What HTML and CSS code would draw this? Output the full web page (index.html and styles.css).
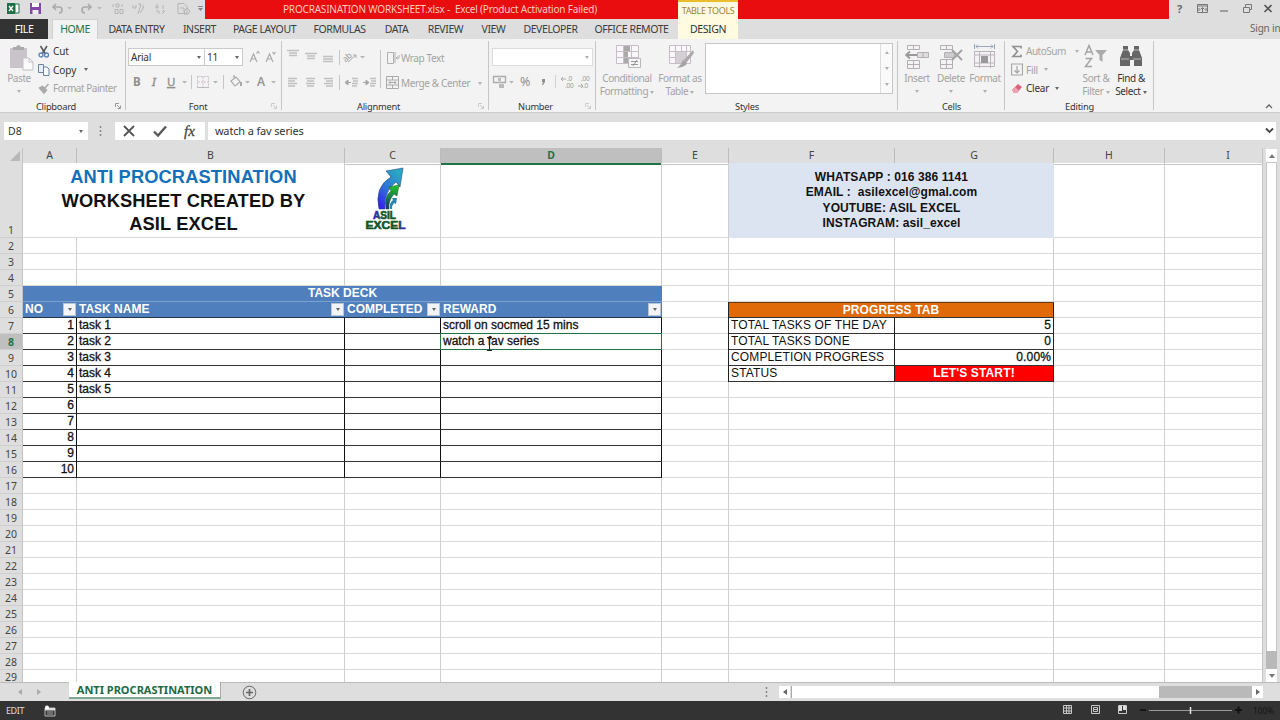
FILE: index.html
```html
<!DOCTYPE html>
<html lang="en">
<head>
<meta charset="utf-8">
<title>PROCRASINATION WORKSHEET.xlsx - Excel</title>
<link rel="stylesheet" href="styles.css">
</head>
<body>
<div class="app">
  <header class="top">
    <div class="top-left">
      <svg class="quick" width="205" height="19" viewBox="0 0 205 19">
        <rect x="7" y="3" width="8" height="11" fill="#1d7044"/><path d="M15 4h4v9h-4z" fill="#fff" stroke="#1d7044"/><path d="M9 6l4 5M13 6l-4 5" stroke="#fff" stroke-width="1.4"/>
        <path d="M30 3h11v11H30z" fill="#8347a8"/><path d="M32 3h7v4h-7z" fill="#fff"/><path d="M32.500 10h6v4h-6z" fill="#eee"/>
        <g fill="none" stroke="#a9a9ae" stroke-width="1.600"><path d="M56 4l-3 3 3 3M53 7h6q3 0 3 3t-3 3"/><path d="M88 4l3 3-3 3M91 7h-6q-3 0-3 3t3 3"/></g>
        <path d="M67 7h5l-2.500 2.500zM97 7h5l-2.500 2.500z" fill="#bbb"/>
        <g fill="none" stroke="#b5b5b5"><path d="M113 4v3M116 4h3v3h-3zM122 4v3M115 9.500h3v4h-3zM120 9.500h3v4h-3z"/><path d="M133 5v3h3v-3M138 4h3l-3 10M143 5v3M144 7l-4 6M157 4v5M155 7h4M163 5v4M156 11h3v3M162 11h3l-3 3"/><path d="M178 3.500h6l3 3v7h-9zM180 8h4v4M185 10l2-2 3 3-2 3h-4z"/></g>
        <path d="M198 8h5l-2.500 3zM198 6h5v1h-5z" fill="#888"/>
      </svg>
      <nav class="tabs-a">
        <span class="file">FILE</span><span class="home">HOME</span>
        <span class="tab w57">DATA ENTRY</span><span class="tab w31">INSERT</span>
      </nav>
    </div>
    <div class="top-mid">
      <div class="titlebar"><span>PROCRASINATION WORKSHEET.xlsx -&nbsp; Excel (Product Activation Failed)</span></div>
      <nav class="tabs-b">
        <span class="tab w61">PAGE LAYOUT</span><span class="tab w50">FORMULAS</span><span class="tab w24">DATA</span><span class="tab w35">REVIEW</span><span class="tab w23">VIEW</span><span class="tab w53">DEVELOPER</span><span class="tab w70">OFFICE REMOTE</span>
      </nav>
    </div>
    <div class="context"><span class="tools">TABLE TOOLS</span><span class="design">DESIGN</span></div>
    <div class="red-rest"></div>
    <div class="top-right">
      <svg width="111" height="19" viewBox="0 0 111 19">
        <text x="8" y="12.500" font-size="11" font-weight="700" fill="#6a6a6a">?</text>
        <path d="M28.500 4.500h10v8h-10zM28.500 6h10M33.500 12V7.500M31.500 9.500l2-2 2 2M30 8v3M37 8v3" fill="none" stroke="#777"/>
        <path d="M51 11h8" stroke="#777" stroke-width="1.300"/>
        <path d="M74.500 7.500h6v5h-6zM76.500 7V4.500h6v5H81" fill="none" stroke="#777"/>
        <path d="M95.500 5l7 7M102.500 5l-7 7" stroke="#555" stroke-width="1.700"/>
      </svg>
      <span class="signin">Sign in</span>
    </div>
  </header>

  <section class="ribbon">
    <div class="group g-clip">
      <div class="body">
        <div class="big paste">
          <svg width="26" height="27" viewBox="0 0 26 27"><path d="M2 4h17v20H2z" fill="#c9c4c9"/><path d="M5 6V3h3q2.500-4 5 0h3v3z" fill="#aaa"/><path d="M15 14h6l4 4v8H15z" fill="#fafafa" stroke="#c3c0c6"/><path d="M21 14v4h4" fill="none" stroke="#c3c0c6"/></svg>
          <span class="off">Paste</span><i class="arr"></i>
        </div>
        <div class="stack">
          <div><svg width="12" height="13" viewBox="0 0 12 13"><path d="M2.500 1l5 8M9 1L4 9" stroke="#555" stroke-width="1.500"/><circle cx="3" cy="10" r="2" fill="none" stroke="#5b84b8" stroke-width="1.300"/><circle cx="8.500" cy="10" r="2" fill="none" stroke="#5b84b8" stroke-width="1.300"/></svg><span class="cut">Cut</span></div>
          <div><svg width="12" height="13" viewBox="0 0 12 13"><path d="M.5 1.500h5v8h-5z" fill="#e8eef6" stroke="#68829f"/><path d="M5.500 4h3.500l2 2v6.500H5.500z" fill="#f8fbff" stroke="#68829f"/></svg><span class="copy">Copy</span><i class="arr dk"></i></div>
          <div><svg width="12" height="13" viewBox="0 0 12 13"><path d="M10.500 2L7 6M4 4l5 4.500M1.500 6l4.500 5 2.500-3L4.500 4.500z" fill="#aaa" stroke="#aaa" stroke-width="1.500"/></svg><span class="off painter">Format Painter</span></div>
        </div>
      </div>
      <div class="label launchable">Clipboard<svg class="launch" width="6" height="6"><path d="M.5 4V.5H4M2 2l3 3M5.500 2.500v3h-3" fill="none" stroke="#999"/></svg></div>
    </div>

    <div class="group g-font">
      <div class="combo-row"><span class="combo fam">Arial<i class="arr dk"></i></span><span class="combo size">11<i class="arr dk"></i></span>
        <svg width="32" height="18" viewBox="0 0 32 18" fill="none" stroke="#aaa" stroke-width="1.200"><path d="M4 14L7.500 6 11 14M5 11h5M10.500 5.500L12 3.500l1.500 2"/><path d="M20 14l3.500-8L27 14M21 11h5M26.500 4L28 6l1.500-2"/></svg>
      </div>
      <svg class="tools-row" width="155" height="18" viewBox="0 0 155 18">
        <g fill="#8f8f8f" font-size="11.500" font-weight="700"><text x="5" y="13">B</text><text x="24" y="13" font-style="italic" font-weight="400" stroke="#8f8f8f" stroke-width=".4">I</text><text x="39" y="13" font-weight="400" text-decoration="underline" stroke="#8f8f8f" stroke-width=".3">U</text></g>
        <path d="M54 8h5l-2.500 2.500zM85 8h5l-2.500 2.500zM117 8h5l-2.500 2.500zM143 8h5l-2.500 2.500z" fill="#b5b5b5"/>
        <path d="M63.500 2v14M95.500 2v14" stroke="#c6c6c6"/>
        <path d="M69.500 3.500h11v11h-11zM75 4v10M70 9h10" fill="none" stroke="#cdbecb" stroke-dasharray="2 1"/><path d="M69 14.500h12" stroke="#bbb"/>
        <path d="M103 8l5-4 4 5-5 4zM106 5V2" fill="none" stroke="#a8a8a8" stroke-width="1.200"/><path d="M113 9v4" stroke="#a8a8a8" stroke-width="2"/>
        <text x="129" y="13" font-size="12" font-weight="600" fill="#989898">A</text>
      </svg>
      <div class="label launchable">Font<svg class="launch" width="6" height="6"><path d="M.5 4V.5H4M2 2l3 3M5.500 2.500v3h-3" fill="none" stroke="#ccc"/></svg></div>
    </div>

    <div class="group g-align">
      <div class="body">
        <svg width="100" height="52" viewBox="0 0 100 52">
          <g stroke="#c0c0c0" stroke-width="1.300">
            <path d="M5 8.500h12M7 11h8M7 13.500h8M23 11.500h12M25 14h8M25 16.500h8M41 14.500h10M41 17h10M41 19.500h10" />
            <path d="M6 36.500h9M6 39h7M6 41.500h9M6 44h7M24 36.500h9M25 39h7M24 41.500h9M25 44h7M42 36.500h9M44 39h7M42 41.500h9M44 44h7"/>
            <path d="M70 36.500h6M71 39h5M70 41.500h6M70 44h5M88 36.500h6M89 39h5M88 41.500h6M88 44h5"/>
          </g>
          <path d="M57.500 8v15M57.500 33v15M98.500 8v38" stroke="#c6c6c6"/>
          <g transform="rotate(-42 68 15)"><text x="61" y="16" font-size="8.500" fill="#999">ab</text></g><path d="M66 20l8-7M74 13h-3M74 13v3" stroke="#aaa" fill="none"/>
          <path d="M78 14h5l-2.500 2.500z" fill="#b5b5b5"/>
          <path d="M63 40.500h6M66 38l-3 2.500 3 2.500zM81 40.500h6M84 38l3 2.500-3 2.500z" fill="#a5a5a5" stroke="#a5a5a5"/>
        </svg>
        <div class="wraps">
          <div><svg width="14" height="14" viewBox="0 0 14 14" fill="none" stroke="#b0b0b0"><path d="M1.500 1.500h6v11h-6zM9 1v11"/><path d="M13 4v3h-3M11.500 5.500L10 7l1.500 1.500"/></svg><span class="off wrap">Wrap Text</span></div>
          <div><svg width="14" height="14" viewBox="0 0 14 14" fill="none" stroke="#aaa"><path d="M.5.500h12v12H.5zM.5 4h12M.5 9h12M6.500 1v3M6.500 9v3M3 6.500h7M4.500 5L3 6.500 4.500 8M8.500 5L10 6.500 8.500 8"/></svg><span class="off merge">Merge &amp; Center</span><i class="arr"></i></div>
        </div>
      </div>
      <div class="label launchable">Alignment<svg class="launch" width="6" height="6"><path d="M.5 4V.5H4M2 2l3 3M5.500 2.500v3h-3" fill="none" stroke="#ccc"/></svg></div>
    </div>

    <div class="group g-num">
      <span class="combo num"><i class="arr"></i></span>
      <svg class="tools-row" width="106" height="18" viewBox="0 0 106 18">
        <path d="M4.500 3.500h12v6h-12z" fill="none" stroke="#aaa" stroke-width="1.300"/><path d="M9 5h3v3H9zM10 11h5v4h-5z" fill="#bbb"/>
        <path d="M20 8h5l-2.500 2.500z" fill="#b5b5b5"/>
        <text x="31" y="13" font-size="12.500" fill="#909090">%</text><path d="M53 6h3v3l-2 3h-1l1-3h-1z" fill="#909090"/>
        <path d="M66.500 2v13" stroke="#d0d0d0"/>
        <g fill="#9c9c9c" font-size="6.500"><text x="78" y="8">.0</text><text x="76" y="15">.00</text><text x="92" y="8">.00</text><text x="94" y="15">.0</text></g>
        <path d="M72 6h5M74 4l-2 2 2 2M89 13h5M92 11l2 2-2 2" stroke="#aaa" fill="none"/>
      </svg>
      <div class="label launchable">Number<svg class="launch" width="6" height="6"><path d="M.5 4V.5H4M2 2l3 3M5.500 2.500v3h-3" fill="none" stroke="#ccc"/></svg></div>
    </div>

    <div class="group g-styles">
      <div class="body">
        <div class="big cond"><svg width="26" height="25" viewBox="0 0 26 25"><path d="M.5 1.500h22v18H.5zM.5 7.500h22M.5 13.500h22M7.500 2v17M15.500 2v17" fill="#f8f8f8" stroke="#c8bcc8"/><path d="M8 2h6v5H8zM8 8h4v5H8zM8 14h6v5H8z" fill="#a9a9a9"/><path d="M12.500 14.500h12v9h-12z" fill="#f6f6f6" stroke="#b9b9b9"/><path d="M15 17.500h7M15 20.500h7M21 16l-4 6" stroke="#999"/></svg><span class="off">Conditional</span><span class="off">Formatting <i class="arr"></i></span></div>
        <div class="big fmt"><svg width="26" height="25" viewBox="0 0 26 25"><path d="M.5 1.500h21v18H.5zM.5 7.500h21M.5 13.500h21M6.500 2v17M12.500 2v17M17.500 2v17" fill="#f8f8f8" stroke="#c8bcc8"/><path d="M7 8h10v11H7z" fill="#d3cfd3"/><path d="M24 6l1 3-7 9-3-2z" fill="#aaa"/><path d="M14 16q5 1 3 5-4 3-9 3 4-3 6-8z" fill="#a5a5a5"/></svg><span class="off">Format as</span><span class="off">Table <i class="arr"></i></span></div>
        <div class="gallery"><div class="gal-btns"><i class="arr up"></i><i class="arr"></i><i class="arr"></i></div></div>
      </div>
      <div class="label">Styles</div>
    </div>

    <div class="group g-cells">
      <div class="body">
        <div class="big"><svg width="24" height="26" viewBox="0 0 24 26" fill="none" stroke="#b5aeb5"><path d="M2.500 1.500h12v4h-12zM8.500 1v5M2.500 16.500h12v8h-12zM2.500 20.500h12M8.500 16v8"/><path d="M12.500 8.500h11v5h-11zM18 9v4" fill="#ddd"/><path d="M1 11h11M5 7.500L1 11l4 3.500" stroke="#999" stroke-width="1.800"/></svg><span class="off">Insert</span><i class="arr"></i></div>
        <div class="big"><svg width="24" height="26" viewBox="0 0 24 26" fill="none" stroke="#b5aeb5"><path d="M1.500 1.500h12v4h-12zM7.500 1v5M1.500 15.500h12v9h-12zM1.500 20.500h12M7.500 16v8"/><path d="M5.500 8.500h10v5h-10z" fill="#ccc"/><path d="M13 6l10 10M23 6L13 16" stroke="#a3a3a3" stroke-width="2"/></svg><span class="off">Delete</span><i class="arr"></i></div>
        <div class="big"><svg width="24" height="26" viewBox="0 0 24 26" fill="none" stroke="#bdb3bd"><path d="M1.500 7.500h20v15h-20zM1.500 11h20M1.500 19h20M6.500 7v17M17.500 7v17"/><path d="M8 12h7v7H8z" fill="#999" stroke="none"/><path d="M3 2.500h17M5 .5l-2 2 2 2M18 .5l2 2-2 2M1.500 0v5M21.500 0v5" stroke="#99a5b8"/></svg><span class="off">Format</span><i class="arr"></i></div>
      </div>
      <div class="label">Cells</div>
    </div>

    <div class="group g-edit">
      <div class="body">
        <div class="stack">
          <div><svg width="12" height="13" viewBox="0 0 12 13"><path d="M10 3.500V1.500H2l4.500 5L2 11.500h8V9.500" fill="none" stroke="#8f8f8f" stroke-width="1.600"/></svg><span class="off autosum">AutoSum</span><i class="arr"></i></div>
          <div><svg width="12" height="13" viewBox="0 0 12 13"><path d="M.5 1h11v11H.5zM6 3v7M3.500 7.500L6 10l2.500-2.500" fill="none" stroke="#a5a5a5" stroke-width="1.200"/></svg><span class="off fill">Fill</span><i class="arr"></i></div>
          <div><svg width="12" height="13" viewBox="0 0 12 13"><path d="M1 8l6-6 4 3-5 6H3z" fill="#d9667e"/><path d="M1 8l3-3 4 3.500L6 11H3z" fill="#eda2b1"/></svg><span class="clear">Clear</span><i class="arr dk"></i></div>
        </div>
        <div class="big sort"><svg width="26" height="25" viewBox="0 0 26 25"><g fill="none" stroke="#a5a5a5" stroke-width="1.500"><path d="M2 11L6 1.500 10 11M3.500 8h5M2.500 14.500h6l-6 8h6.500"/></g><path d="M12 6h12l-4.500 5v7l-3-2v-5z" fill="#aaa"/></svg><span class="off">Sort &amp;</span><span class="off">Filter <i class="arr"></i></span></div>
        <div class="big find"><svg width="26" height="25" viewBox="0 0 26 25"><path d="M5 2h5v4l2 3v3h2V9l2-3V2h5v4l3 8v8h-8v-6h-2v0h-2v6H2v-8l3-8z" fill="#666"/><path d="M5 6h5M16 6h5M3 15h8M15 15h8" stroke="#bbb"/></svg><span>Find &amp;</span><span>Select <i class="arr dk"></i></span></div>
      </div>
      <div class="label">Editing</div>
    </div>
    <div class="ribbon-end"><svg width="8" height="6"><path d="M1 5l3-3 3 3" fill="none" stroke="#666" stroke-width="1.300"/></svg></div>
  </section>

  <section class="formula">
    <div class="namebox">D8<i class="arr dk"></i></div>
    <svg width="3" height="10" class="grip"><path d="M1.500 0v10" stroke="#888" stroke-width="1.500" stroke-dasharray="2 2"/></svg>
    <div class="fx"><svg width="90" height="18" viewBox="0 0 90 18"><path d="M9 4l10 10M19 4L9 14" stroke="#555" stroke-width="1.800"/><path d="M39 9.500l4 4L51 4.500" fill="none" stroke="#555" stroke-width="2.300"/><text x="69" y="13.500" class="fxt">fx</text></svg></div>
    <div class="input"><span>watch a fav series</span><svg width="9" height="7"><path d="M1 1.500l3.500 3.500L8 1.500" fill="none" stroke="#444" stroke-width="1.800"/></svg></div>
  </section>

  <section class="sheet">
    <div class="rowheads">
      <div class="corner"><svg width="10" height="10"><path d="M10 0v10H0z" fill="#b8b8b8"/></svg></div>
      <div class="tall">1</div><div>2</div><div>3</div><div>4</div><div>5</div><div>6</div><div>7</div><div class="sel">8</div><div>9</div><div>10</div><div>11</div><div>12</div><div>13</div><div>14</div><div>15</div><div>16</div><div>17</div><div>18</div><div>19</div><div>20</div><div>21</div><div>22</div><div>23</div><div>24</div><div>25</div><div>26</div><div>27</div><div>28</div><div class="last">29</div>
    </div>
    <div class="main">
      <div class="cols heads"><div>A</div><div>B</div><div>C</div><div class="sel">D</div><div>E</div><div>F</div><div>G</div><div>H</div><div>I</div></div>
      <div class="cols grid">
        <div class="line a"></div><div class="line b"></div><div class="line c"></div><div class="line d"></div><div class="line e"></div><div class="line f"></div><div class="line g"></div><div class="line h"></div>
        <div class="title r1"><span class="blue">ANTI PROCRASTINATION</span><span>WORKSHEET CREATED BY</span><span>ASIL EXCEL</span></div>
        <div class="logo r1 c">
          <svg width="44" height="68" viewBox="0 0 44 68">
            <defs><linearGradient id="up" x1="0" y1="1" x2="0.600" y2="0"><stop offset="0" stop-color="#3511f0"/><stop offset=".5" stop-color="#2f70d8"/><stop offset="1" stop-color="#2aa6c2"/></linearGradient><linearGradient id="gr" x1="0" y1="1" x2="0" y2="0"><stop offset="0" stop-color="#17307a"/><stop offset="1" stop-color="#20c820"/></linearGradient>
            <linearGradient id="asil"><stop offset="0" stop-color="#3a12e0"/><stop offset=".35" stop-color="#14532a"/><stop offset="1" stop-color="#14532a"/></linearGradient>
            <linearGradient id="excel"><stop offset="0" stop-color="#14532a"/><stop offset=".78" stop-color="#14532a"/><stop offset="1" stop-color="#4a22dd"/></linearGradient></defs>
            <path d="M15 44Q10 22 27 12l-5-6 17-3-3 19-4-5Q20 26 21 44z" fill="url(#up)" stroke="#264c80" stroke-width=".6"/>
            <path d="M22 44Q20 31 27 26l-2-4 10-2-2 11-3-2Q24 36 25 44z" fill="url(#gr)" stroke="#155a25" stroke-width=".5"/>
            <path d="M26 44q-1-6 3-9l-1-2 5 0-1 6-2-1q-2 2-2 6z" fill="#2a83b0"/>
            <g class="logotext"><text x="9" y="54" textLength="23" lengthAdjust="spacingAndGlyphs" fill="url(#asil)" stroke="url(#asil)">ASIL</text><text x="1.500" y="63.500" textLength="40" lengthAdjust="spacingAndGlyphs" fill="url(#excel)" stroke="url(#excel)">EXCEL</text></g>
          </svg>
        </div>
        <div class="contact r1"><span>WHATSAPP : 016 386 1141</span><span>EMAIL :&nbsp; asilexcel@gmal.com</span><span>YOUTUBE: ASIL EXCEL</span><span>INSTAGRAM: asil_excel</span></div>

        <div class="deck">TASK DECK</div>
        <div class="th a"><span>NO</span><b class="filter"></b></div><div class="th b"><span>TASK NAME</span><b class="filter"></b></div><div class="th c"><span class="comp">COMPLETED</span><b class="filter"></b></div><div class="th d"><span>REWARD</span><b class="filter"></b></div>
        <div class="tasks">
          <span>1</span><span>task 1</span><span></span><span>scroll on socmed 15 mins</span>
          <span>2</span><span>task 2</span><span></span><span>watch a fav series</span>
          <span>3</span><span>task 3</span><span></span><span></span>
          <span>4</span><span>task 4</span><span></span><span></span>
          <span>5</span><span>task 5</span><span></span><span></span>
          <span>6</span><span></span><span></span><span></span>
          <span>7</span><span></span><span></span><span></span>
          <span>8</span><span></span><span></span><span></span>
          <span>9</span><span></span><span></span><span></span>
          <span>10</span><span></span><span></span><span></span>
        </div>
        <div class="selection"><svg class="ibeam" width="7" height="14"><path d="M1 .5h5M3.500 1v12M1 13.500h5" stroke="#222" fill="none"/></svg></div>
        <div class="progress">
          <span class="phead">PROGRESS TAB</span>
          <span>TOTAL TASKS OF THE DAY</span><span class="val">5</span>
          <span>TOTAL TASKS DONE</span><span class="val">0</span>
          <span>COMPLETION PROGRESS</span><span class="val">0.00%</span>
          <span>STATUS</span><span class="start">LET'S START!</span>
        </div>
      </div>
    </div>
    <div class="vscroll"><div class="btn"><i class="tri up"></i></div><div class="track"></div><div class="thumb"></div><div class="btn"><i class="tri down"></i></div></div>
  </section>

  <footer class="sheetbar">
    <div class="nav"><i class="tri left"></i><i class="tri right"></i></div>
    <div class="sheet-tab">ANTI PROCRASTINATION</div>
    <svg class="plus" width="15" height="15" viewBox="0 0 15 15" fill="none" stroke="#666"><circle cx="7.500" cy="7.500" r="6.300"/><path d="M4 7.500h7M7.500 4v7" stroke-width="1.700"/></svg>
    <svg class="dots" width="3" height="10"><path d="M1.500 0v10" stroke="#888" stroke-width="1.500" stroke-dasharray="2 2"/></svg>
    <div class="hscroll"><div class="hb"><i class="tri left dk"></i></div><div class="htrack"></div><div class="hthumb"></div><div class="hb"><i class="tri right dk"></i></div></div>
  </footer>
  <div class="status">
    <span class="edit">EDIT</span>
    <svg width="12" height="12" viewBox="0 0 12 12"><path d="M1 3h10v8H1z" fill="none" stroke="#bbb"/><path d="M1 3h10v2.500H1z" fill="#ddd"/><circle cx="3" cy="2.500" r="2" fill="#fff"/><path d="M3 7h6M3 9h6" stroke="#aaa"/></svg>
    <svg class="views" width="222" height="19" viewBox="0 0 222 19">
      <g fill="none" stroke="#c8c8c8"><path d="M7.500 4.500h8v8h-8zM10.500 4v9M13 4v9M7 7h9M7 10h9"/><path d="M35.500 4.500h8v8h-8zM37.500 6.500h4v4h-4zM38 8.500h3"/><path d="M62.500 4.500h8v8h-8z"/></g><path d="M63 5h3v5h-3zM67 5h3v4h-3z" fill="#ddd"/>
      <path d="M84 9h6" stroke="#151515" stroke-width="2"/><path d="M93 9.500h83" stroke="#999"/><path d="M134.500 6v7" stroke="#e5e5e5" stroke-width="1.500"/><path d="M179 9h7M182.500 5.500v7" stroke="#111" stroke-width="2"/>
      <text x="197" y="13" textLength="21" lengthAdjust="spacingAndGlyphs" font-size="9" fill="#151515">100%</text>
    </svg>
  </div>
</div>
</body>
</html>
```
FILE: styles.css
```css
* { box-sizing: border-box; }
body { margin: 0; font-family: "Noto Sans", "Open Sans", sans-serif; font-size: 10px; color: #333; overflow: hidden; }
svg { display: block; flex: none; }
.app { width: 1280px; height: 720px; display: flex; flex-direction: column; background: #dedede; overflow: hidden; white-space: nowrap; }
.arr { display: inline-block; flex: none; border: 2.500px solid transparent; border-top: 3px solid #b0b0b0; border-bottom: 0; }
.arr.dk { border-top-color: #666; }
.arr.up { border-top: 0; border-bottom: 3px solid #b0b0b0; }
.off { color: #a3a3a3; }

/* Title bar and ribbon tabs */
.top { height: 39px; flex: none; display: flex; background: #dedede; }
.top-left nav, .top-mid nav { height: 20px; display: flex; line-height: 20px; font-size: 10.500px; letter-spacing: -.4px; color: #3c3c3c; }
.top-left { width: 205px; flex: none; }
.file { width: 48px; flex: none; background: #333; color: #fff; text-align: center; }
.home { width: 46px; flex: none; margin-left: 4px; background: #f3f3f3; color: #217346; text-align: center; border: 1px solid #d0d0d0; border-bottom: 0; line-height: 18px; }
.tab { display: flex; justify-content: center; flex: none; }
.tabs-a .w57 { margin-left: 10px; }
.tabs-a .w31 { margin-left: 19px; }
.tabs-b { gap: 19px; padding-left: 29px; }
.w57 { width: 57px; } .w31 { width: 31px; } .w61 { width: 61px; } .w50 { width: 51px; } .w24 { width: 25px; } .w35 { width: 35px; } .w23 { width: 23px; } .w53 { width: 53px; } .w70 { width: 71px; }
.top-mid { width: 473px; flex: none; }
.titlebar { height: 19px; background: #e90d0f; color: #ffc9c0; font-size: 10px; line-height: 19px; padding-left: 78px; letter-spacing: -.19px; }
.context { width: 60px; background: #fffbe0; border-top: 2px solid #ebbd2c; display: flex; flex-direction: column; align-items: center; }
.tools { font-size: 9px; line-height: 17px; letter-spacing: -.35px; color: #a08431; }
.design { font-size: 10.500px; line-height: 20px; letter-spacing: -.4px; }
.red-rest { width: 431px; height: 19px; background: #e90d0f; }
.top-right { width: 111px; overflow: hidden; }
.signin { display: block; padding-left: 81px; line-height: 18px; color: #666; letter-spacing: -.2px; }

/* Ribbon */
.ribbon { height: 74px; flex: none; display: flex; background: #f3f3f3; border-bottom: 1px solid #cbcbcb; letter-spacing: -.25px; }
.group { display: flex; flex-direction: column; padding-top: 3px; flex: none; background: linear-gradient(#c6c6c6, #c6c6c6) right 0 top 2px / 1px 69px no-repeat; }
.body { display: flex; height: 59px; }
.label { margin-top: auto; height: 11px; line-height: 11px; font-size: 9.300px; text-align: center; color: #333; }
.label.launchable { display: grid; grid-template-columns: 1fr 14px; }
.label svg { margin: 2px 0 0 3px; }
.big { display: flex; flex-direction: column; align-items: center; line-height: 13px; letter-spacing: -.4px; }
.big svg { margin: 2px 0 3px; }
.big > .arr { margin-top: 5px; }
.big .arr { vertical-align: 1px; }
.stack { display: flex; flex-direction: column; }
.stack > div { display: flex; align-items: center; height: 18.500px; gap: 3px; }
.stack .arr { margin-left: 3px; }
.g-clip { width: 126px; }
.paste { width: 30px; margin-left: 4px; }
.paste svg { margin: 2px 0 1px 4px; }
.paste .arr { margin-top: 5px; }
.g-clip .stack { margin-left: 4px; }
.copy { margin-right: 2px; letter-spacing: 0; }
.cut { letter-spacing: -.1px; }
.painter { letter-spacing: -.48px; }
.g-font { width: 156px; padding-left: 2px; }
.combo-row { display: flex; margin-top: 6px; }
.combo { height: 18px; background: #fff; border: 1px solid #cacaca; display: flex; align-items: center; justify-content: space-between; padding: 0 3px 0 2px; }
.fam { width: 77px; } .size { width: 38px; border-left: 0; }
.combo-row svg { margin-left: 3px; }
.tools-row { margin-top: 7px; }
.g-align { width: 207px; }
.wraps { padding: 9px 0 0 4px; }
.wraps > div { display: flex; height: 25px; align-items: flex-start; gap: 1px; line-height: 14px; }
.wrap { letter-spacing: -.4px; }
.merge { letter-spacing: -.38px; }
.wraps .arr { margin: 6px 0 0 7px; }
.g-num { width: 107px; }
.num { width: 101px; margin: 6px 0 0 3px; justify-content: flex-end; border-color: #ddd; }
.g-styles { width: 302px; }
.cond { width: 54px; margin-left: 4px; }
.fmt { width: 52px; }
.cond svg { margin-left: 3px; }
.fmt svg { margin-left: 3px; }
.gallery { width: 188px; height: 51px; margin: 1px 0 0 -1px; background: #fff; border: 1px solid #c6c6c6; display: flex; justify-content: flex-end; }
.gal-btns { width: 12px; border-left: 1px solid #ddd; display: flex; flex-direction: column; justify-content: space-around; align-items: center; background: #fafafa; }
.g-cells { width: 107px; }
.g-cells .big { width: 34px; }
.g-cells .big:first-child { margin-left: 2px; }
.g-cells svg { margin-bottom: 2px; }
.g-edit { width: 149px; }
.g-edit .stack { width: 68px; margin-left: 6px; }
.autosum { letter-spacing: -.5px; margin-right: 3px; }
.sort { width: 34px; }
.find { width: 36px; }
.ribbon-end { flex: 1; display: flex; align-items: flex-end; justify-content: flex-end; padding: 0 7px 3px 0; }

/* Formula bar */
.formula { height: 35px; flex: none; display: flex; padding: 9px 4px 0; align-items: flex-start; background: #dedede; }
.formula > div { height: 18px; background: #fff; }
.namebox { width: 84px; display: flex; align-items: center; justify-content: space-between; padding: 0 5px 0 4px; font-size: 10.500px; }
.grip { margin: 4px 13px 0 11px; }
.fx { width: 90px; }
.fxt { font: italic 15px "Liberation Serif", serif; fill: #444; stroke: #444; stroke-width: .3px; }
.formula .input { width: 1070px; margin-left: 3px; display: flex; align-items: center; justify-content: space-between; padding: 0 2px 2px 7px; font-size: 11px; letter-spacing: -.15px; }

/* Worksheet */
.sheet { height: 534px; flex: none; display: flex; overflow: hidden; }
.rowheads { width: 23px; flex: none; text-align: center; font-size: 10.500px; color: #444; border-right: 1px solid #c4c4c4; }
.rowheads > div { height: 16px; line-height: 16px; border-bottom: 1px solid #cfcfcf; }
.rowheads .corner { height: 15px; padding: 3px 0 0 10px; border-bottom: 0; }
.rowheads .tall { height: 75px; padding-top: 59px; }
.rowheads .sel { background: #bfbfbf; color: #217346; font-weight: 700; }
.rowheads .last { height: 15px; line-height: 15px; border-bottom: 0; }
.main { width: 1240px; flex: none; background: #fff; border-right: 1px solid #c4c4c4; overflow: hidden; }
.cols { display: grid; grid-template-columns: 54px 268px 96px 221px 67px 166px 159px 111px 127px; width: 1269px; }
.heads { height: 15px; background: #dedede; font-size: 10.500px; line-height: 15px; text-align: center; color: #444; }
.heads > div { border-right: 1px solid #bcbcbc; border-bottom: 1px solid #c8c8c8; }
.heads .sel { background: #bfbfbf; color: #217346; font-weight: 700; border-bottom: 2px solid #217346; }
.grid { grid-template-rows: 75px repeat(28, 16px); font: 12px/15px "Liberation Sans", Arial, sans-serif; color: #111; background: repeating-linear-gradient(#fff 0, #fff 15px, #dadada 15px, #dadada 16px) 0 75px no-repeat, linear-gradient(#dadada, #dadada) 0 74px / 100% 1px no-repeat; }
.line { grid-row: 1 / 30; border-right: 1px solid #cfcfcf; }
.a { grid-column: 1; } .b { grid-column: 2; } .c { grid-column: 3; } .d { grid-column: 4; } .e { grid-column: 5; } .f { grid-column: 6; } .g { grid-column: 7; } .h { grid-column: 8; }
.r1 { grid-row: 1; }
.title { grid-column: 1 / 3; background: #fff; display: flex; flex-direction: column; align-items: center; font-weight: 700; font-size: 18.300px; line-height: 23.500px; letter-spacing: .12px; padding-top: 2px; border-right: 1px solid #cfcfcf; border-bottom: 1px solid #dadada; }
.blue { color: #1470b8; }
.logo { padding: 2px 0 0 19px; }
.logotext { font: 700 11px "Liberation Sans", sans-serif; stroke-width: .6px; }
.contact { grid-column: 6 / 8; background: #dce4f1; display: flex; flex-direction: column; align-items: center; font-weight: 700; line-height: 15.400px; letter-spacing: .1px; padding-top: 7px; }
.deck { grid-row: 5; grid-column: 1 / 5; background: #4f7fbd; color: #fff; font-weight: 700; text-align: center; border-bottom: 1px solid #7ba0d2; }
.th { grid-row: 6; background: #4f7fbd; color: #fff; font-weight: 700; display: flex; justify-content: space-between; padding-left: 2px; border-bottom: 1px solid #26344a; }
.filter { width: 13px; height: 13px; margin: 1px 1px 0 0; background: #f2f4f8; border: 1px solid #b9c4d4; display: flex; align-items: center; justify-content: center; }
.filter::after { content: ""; border: 2.500px solid transparent; border-top: 3px solid #666; border-bottom: 0; }
.tasks { grid-row: 7 / 17; grid-column: 1 / 5; display: grid; grid-template-columns: 54px 268px 96px 221px; -webkit-text-stroke: .3px #111; }
.tasks span { height: 16px; padding-left: 2px; border-right: 1px solid #111; border-bottom: 1px solid #333; }
.tasks span:nth-child(4n + 1) { text-align: right; padding-right: 2px; }
.selection { grid-row: 8; grid-column: 4; border: 1px solid #217346; margin: -1px 0 0 -1px; position: relative; }
.ibeam { position: absolute; left: 45px; top: 3px; }
.progress { grid-row: 6 / 11; grid-column: 6 / 8; display: grid; grid-template-columns: 166px 159px; background: #fff; margin: 0 0 0 -1px; border-left: 1px solid #222; }
.progress span { height: 16px; border-right: 1px solid #222; border-bottom: 1px solid #333; padding: 0 2px; letter-spacing: .13px; }
.progress .phead { grid-column: 1 / 3; background: #e06a0a; color: #fff; font-weight: 700; text-align: center; border-top: 1px solid #6b3a10; line-height: 14px; }
.progress .val { text-align: right; -webkit-text-stroke: .3px #111; }
.progress .start { background: #f00; color: #fff; font-weight: 700; text-align: center; }

/* Scroll bars */
.vscroll { width: 11px; margin: 1px 0 0 3px; display: flex; flex-direction: column; }
.btn { height: 13px; background: #fff; display: flex; align-items: center; justify-content: center; flex: none; }
.track { flex: 1; background: #fff; border: 1px solid #c6c6c6; border-bottom: 0; }
.thumb { height: 18px; background: #b9b9b9; }
.tri { display: block; border: 3px solid transparent; }
.tri.up { border-top: 0; border-bottom: 4px solid #777; }
.tri.down { border-bottom: 0; border-top: 4px solid #777; }
.tri.left { border-left: 0; border-right: 4px solid #aaa; }
.tri.right { border-right: 0; border-left: 4px solid #aaa; }
.tri.left.dk { border-right-color: #666; }
.tri.right.dk { border-left-color: #666; }

/* Sheet tabs and status bar */
.sheetbar { height: 19px; flex: none; display: flex; border-top: 1px solid #bbb; background: #dedede; }
.nav { width: 69px; display: flex; align-items: flex-start; gap: 15px; padding: 6px 0 0 18px; }
.sheet-tab { width: 152px; height: 17px; margin-top: -1px; background: #fff; border-bottom: 2px solid #7fa893; border-right: 1px solid #aaa; color: #1e6a42; font-weight: 700; font-size: 11px; line-height: 15px; text-align: center; }
.plus { margin: 2px 0 0 21px; }
.dots { margin: 4px 0 0 508px; }
.hscroll { width: 484px; height: 12px; margin: 3px 0 0 11px; display: flex; }
.hb { width: 11px; background: #fff; display: flex; align-items: center; justify-content: center; }
.htrack { width: 368px; background: #fff; border-left: 1px solid #aaa; margin-left: 1px; }
.hthumb { flex: 1; background: #b9b9b9; }
.status { height: 19px; background: #333; display: flex; align-items: center; padding-left: 6px; }
.edit { width: 38px; font-size: 9px; letter-spacing: -.4px; color: #ddd; }
.views { margin-left: auto; margin-right: 2px; }
```
